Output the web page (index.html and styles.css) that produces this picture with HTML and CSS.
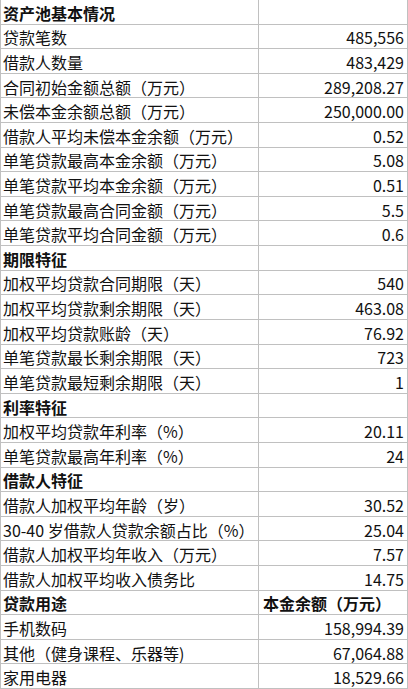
FILE: index.html
```html
<!DOCTYPE html>
<html lang="zh-CN">
<head>
<meta charset="utf-8">
<link rel="stylesheet" href="styles.css">
</head>
<body>
<div class="sheet">
  <div class="c h">资产池基本情况</div><div class="c"></div>
  <div class="c">贷款笔数</div><div class="c n">485,556</div>
  <div class="c">借款人数量</div><div class="c n">483,429</div>
  <div class="c">合同初始金额总额（万元）</div><div class="c n">289,208.27</div>
  <div class="c">未偿本金余额总额（万元）</div><div class="c n">250,000.00</div>
  <div class="c">借款人平均未偿本金余额（万元）</div><div class="c n">0.52</div>
  <div class="c">单笔贷款最高本金余额（万元）</div><div class="c n">5.08</div>
  <div class="c">单笔贷款平均本金余额（万元）</div><div class="c n">0.51</div>
  <div class="c">单笔贷款最高合同金额（万元）</div><div class="c n">5.5</div>
  <div class="c">单笔贷款平均合同金额（万元）</div><div class="c n">0.6</div>
  <div class="c h">期限特征</div><div class="c"></div>
  <div class="c">加权平均贷款合同期限（天）</div><div class="c n">540</div>
  <div class="c">加权平均贷款剩余期限（天）</div><div class="c n">463.08</div>
  <div class="c">加权平均贷款账龄（天）</div><div class="c n">76.92</div>
  <div class="c">单笔贷款最长剩余期限（天）</div><div class="c n">723</div>
  <div class="c">单笔贷款最短剩余期限（天）</div><div class="c n">1</div>
  <div class="c h">利率特征</div><div class="c"></div>
  <div class="c">加权平均贷款年利率（%）</div><div class="c n">20.11</div>
  <div class="c">单笔贷款最高年利率（%）</div><div class="c n">24</div>
  <div class="c h">借款人特征</div><div class="c"></div>
  <div class="c">借款人加权平均年龄（岁）</div><div class="c n">30.52</div>
  <div class="c">30-40 岁借款人贷款余额占比（%）</div><div class="c n">25.04</div>
  <div class="c">借款人加权平均年收入（万元）</div><div class="c n">7.57</div>
  <div class="c">借款人加权平均收入债务比</div><div class="c n">14.75</div>
  <div class="c h">贷款用途</div><div class="c h hr">本金余额（万元）</div>
  <div class="c">手机数码</div><div class="c n">158,994.39</div>
  <div class="c">其他（健身课程、乐器等)</div><div class="c n">67,064.88</div>
  <div class="c">家用电器</div><div class="c n">18,529.66</div>
</div>
</body>
</html>
```

FILE: styles.css
```css
html, body {
  margin: 0;
  padding: 0;
  background: #ffffff;
}
.sheet {
  width: 408px;
  height: 689px;
  box-sizing: border-box;
  display: grid;
  grid-template-columns: 257px 1fr;
  grid-template-rows: repeat(28, 1fr);
  gap: 1px;
  padding: 0 1px 1px 1px;
  background: #c0c0c0;
  font-family: "Noto Sans CJK SC", "Noto Sans", sans-serif;
  font-size: 16px;
  color: #111111;
}
.c {
  background: #ffffff;
  display: flex;
  align-items: center;
  padding: 2px 3px 0 2px;
  white-space: nowrap;
  overflow: hidden;
  line-height: 1;
}
.n {
  justify-content: flex-end;
}
.h {
  font-weight: bold;
}
.hr {
  padding-left: 4px;
}
```
